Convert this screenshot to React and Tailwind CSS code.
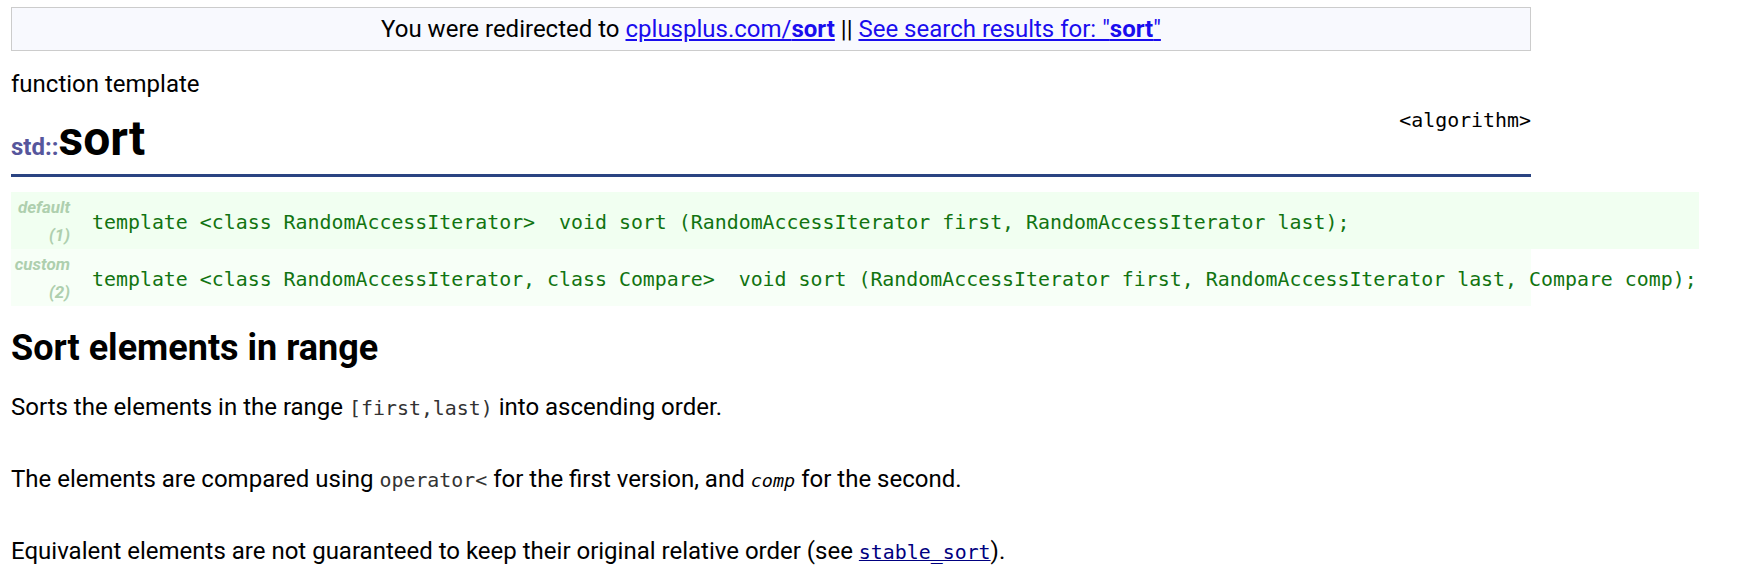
const SANS = "font-['Roboto',_'Liberation_Sans',_sans-serif]"
const MONO = "font-['DejaVu_Sans_Mono',_'Liberation_Mono',_monospace]"

const PROTOTYPES = [
  {
    label: 'default',
    num: '(1)',
    code: 'template <class RandomAccessIterator>  void sort (RandomAccessIterator first, RandomAccessIterator last);',
    row: 'w-[1688px] bg-[#f1fff1]',
  },
  {
    label: 'custom',
    num: '(2)',
    code: 'template <class RandomAccessIterator, class Compare>  void sort (RandomAccessIterator first, RandomAccessIterator last, Compare comp);',
    row: 'w-full bg-[#f7fff7]',
  },
]

function Code({ children }) {
  return <code className={`${MONO} text-[19.9px] text-[#333]`}>{children}</code>
}

export default function App() {
  return (
    <div className={`${SANS} bg-white text-black min-h-[573px] pt-[7px] pl-[11px]`}>
      <div className="w-[1520px]">
        <div className="border border-[#cccccc] bg-[#f8f9fe] py-[7px] text-center text-[24px] leading-[28px]">
          You were redirected to{' '}
          <a href="#" className="text-[#1a0dee] underline">
            cplusplus.com/<b>sort</b>
          </a>{' '}
          ||{' '}
          <a href="#" className="text-[#1a0dee] underline">
            See search results for: "<b>sort</b>"
          </a>
        </div>

        <div className="mt-[19px] text-[24px] leading-[28px]">function template</div>

        <div className="mt-[13px] flex items-start justify-between border-b-[3px] border-[#2a4482] pb-[7px]">
          <h1 className="text-[48px] leading-[56px] font-bold">
            <span className="text-[24px] leading-none text-[#56569c]">std::</span>
            sort
          </h1>
          <div className={`${MONO} text-[19.9px] leading-[20px]`}>&lt;algorithm&gt;</div>
        </div>

        <div className="mt-[15px]">
          {PROTOTYPES.map((p) => (
            <div key={p.label} className={`flex h-[57px] items-center ${p.row}`}>
              <div className="w-[59px] shrink-0 self-start pt-[1px] text-right text-[17px] leading-[28px] font-bold italic text-[#aecfae]">
                <div>{p.label}</div>
                <div>{p.num}</div>
              </div>
              <div className={`${MONO} ml-[22px] mt-[4px] whitespace-pre text-[19.9px] text-[#117411]`}>{p.code}</div>
            </div>
          ))}
        </div>

        <h2 className="mt-[21px] text-[36px] leading-[42px] font-bold">Sort elements in range</h2>

        <div className="mt-[21px] text-[24px] leading-[35.5px]">
          <p className="mb-[35.5px]">
            Sorts the elements in the range <Code>[first,last)</Code> into ascending order.
          </p>
          <p className="mb-[35.5px]">
            The elements are compared using <Code>operator&lt;</Code> for the first version, and{' '}
            <i className={`${MONO} text-[18.5px]`}>comp</i> for the second.
          </p>
          <p>
            Equivalent elements are not guaranteed to keep their original relative order (see{' '}
            <a href="#" className={`${MONO} text-[19.9px] text-[#000080] underline`}>
              stable_sort
            </a>
            ).
          </p>
        </div>
      </div>
    </div>
  )
}
